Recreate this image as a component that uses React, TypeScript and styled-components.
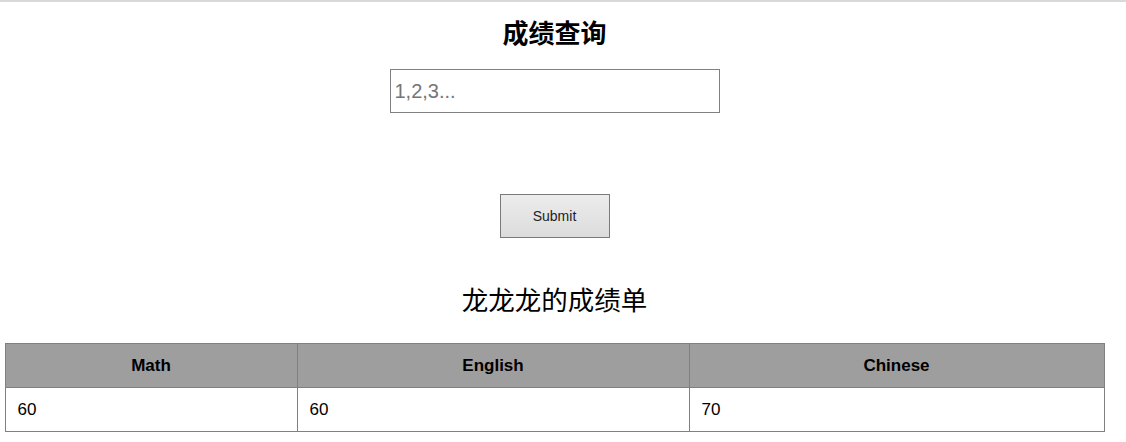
import React from 'react'
import styled, { createGlobalStyle } from 'styled-components'

const GlobalStyle = createGlobalStyle`
  html, body {
    margin: 0;
    padding: 0;
    background: #ffffff;
    font-family: "Liberation Sans", Arial, "Noto Sans CJK SC", sans-serif;
    color: #000;
  }
`

const TopRule = styled.div`
  height: 2px;
  background: #d9d9d9;
`

const Page = styled.div`
  width: 1099px;
  margin-left: 5px;
  display: flex;
  flex-direction: column;
  align-items: center;
`

const Title = styled.h1`
  margin: 15px 0 0;
  font-family: "Noto Sans CJK SC", sans-serif;
  font-size: 26px;
  font-weight: 700;
  line-height: 30px;
`

const QueryInput = styled.input`
  box-sizing: border-box;
  margin-top: 22px;
  width: 330px;
  height: 44px;
  padding: 0 4px;
  border: 1px solid #808080;
  font-family: "Liberation Sans", Arial, sans-serif;
  font-size: 20px;
  outline: none;
  &::placeholder {
    color: #757575;
  }
`

const SubmitButton = styled.button`
  box-sizing: border-box;
  margin-top: 81px;
  width: 110px;
  height: 44px;
  border: 1px solid #7a7a7a;
  background: linear-gradient(#ececec, #dcdcdc);
  font-family: "Liberation Sans", Arial, sans-serif;
  font-size: 14px;
  color: #222;
`

const SubTitle = styled.h2`
  margin: 42px 0 0;
  font-family: "Noto Sans CJK SC", sans-serif;
  font-size: 26.5px;
  font-weight: 400;
  line-height: 38px;
`

const ScoreTable = styled.table`
  margin-top: 25px;
  width: 1099px;
  border-collapse: collapse;
  table-layout: fixed;
`

const HeadCell = styled.th`
  height: 42px;
  padding: 1px 0 0;
  background: #9e9e9e;
  border: 1px solid #808080;
  font-size: 17px;
  font-weight: 700;
  text-align: center;
`

const BodyCell = styled.td`
  height: 43px;
  padding: 0 12px;
  border: 1px solid #808080;
  font-size: 17px;
  text-align: left;
`

const subjects = [
  { name: 'Math', width: 292, score: 60 },
  { name: 'English', width: 392, score: 60 },
  { name: 'Chinese', width: 415, score: 70 },
]

const App: React.FC = () => {
  return (
    <>
      <GlobalStyle />
      <TopRule />
      <Page>
        <Title>成绩查询</Title>
        <QueryInput placeholder="1,2,3..." />
        <SubmitButton>Submit</SubmitButton>
        <SubTitle>龙龙龙的成绩单</SubTitle>
        <ScoreTable>
          <colgroup>
            {subjects.map(s => (
              <col key={s.name} style={{ width: s.width }} />
            ))}
          </colgroup>
          <thead>
            <tr>
              {subjects.map(s => (
                <HeadCell key={s.name}>{s.name}</HeadCell>
              ))}
            </tr>
          </thead>
          <tbody>
            <tr>
              {subjects.map(s => (
                <BodyCell key={s.name}>{s.score}</BodyCell>
              ))}
            </tr>
          </tbody>
        </ScoreTable>
      </Page>
    </>
  )
}

export default App
